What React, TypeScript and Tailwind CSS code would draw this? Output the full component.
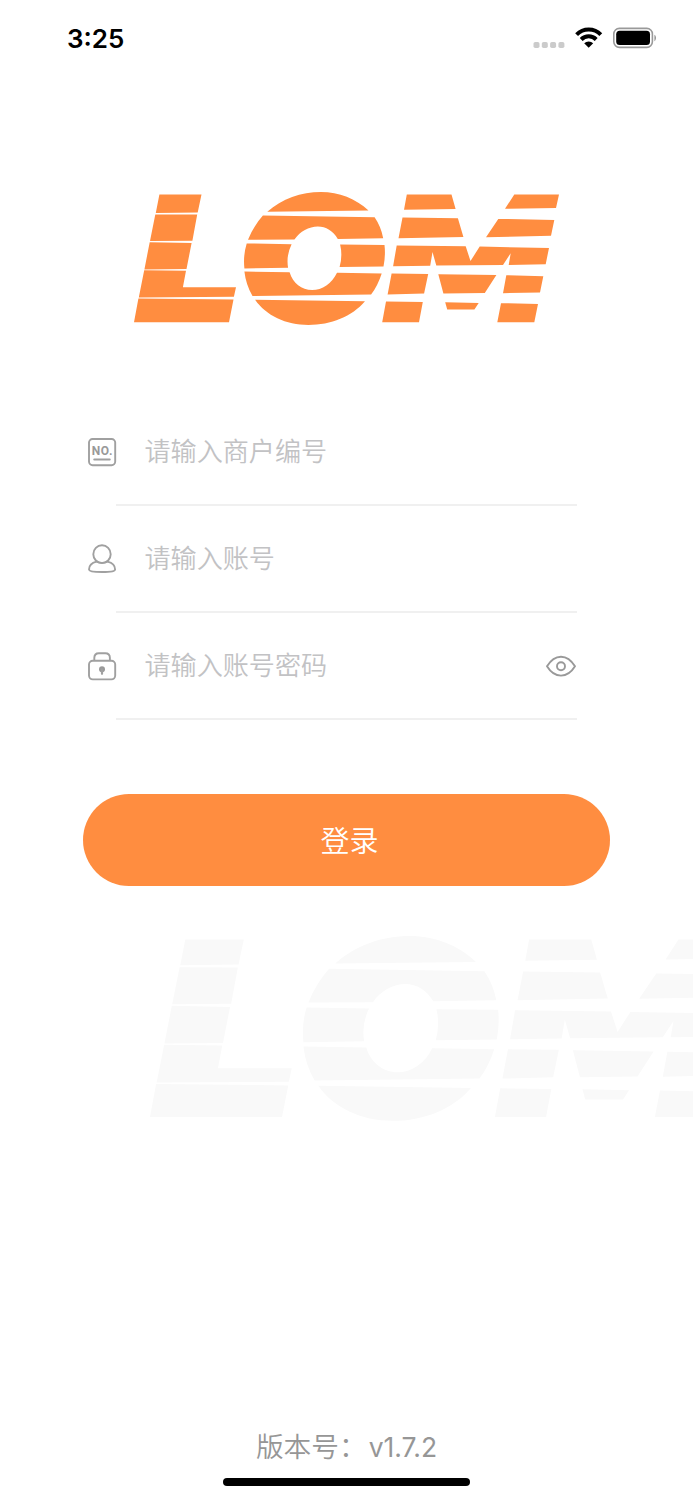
import type { ReactNode } from "react";

const LOGO_BANDS = [
  // L
  "M25.4 2.9H67.5L63.7 20.9L21.8 21.4Z",
  "M21.3 22.8L63.2 23L58.4 49.2L16 49.4Z",
  "M15.7 50.6L57.6 51.4L52.5 77.3L10.4 77.8Z",
  "M10.2 78.7L52 79.2L48.9 95.6H102L99.9 105.2L4.8 105.8Z",
  "M4.4 106.8L99.5 107.9L95 130.6H0Z",
  // O
  "M133.3 20.2C148 7 167 0.4 187 0.4C205 0.4 222 7 234.5 19Z",
  "M128.9 24L240.6 25.7Q247 35 249.2 46.6L203.8 47.3C199 39.5 192 35 183.8 35C175 35 166 40 160.4 48L114 48.2Q119.5 34.5 128.9 24Z",
  "M112.7 51.8L157.6 52.6Q152 64 154.1 76.1L110.4 76.8Q109 64 112.7 51.8Z",
  "M206.1 53L250.5 53.5Q251.7 64 249.5 74.9L205.6 75.4Q208.8 64 206.1 53Z",
  "M110.4 79.9L155.6 80.6C159 91.5 167.5 98.4 178.2 98.4C188 98.4 198 92 203 81.1L247.7 81.8Q244 93.5 237.1 103L118.5 104.4Q112 93.5 110.4 79.9Z",
  "M121.1 108.2L231 109.7C218 125 197 133.4 174.4 133.4C152 133.4 132 124 121.1 108.2Z",
  // M
  "M272.8 2.9H317.5L321.6 17.5L270 18.2Z",
  "M380.3 2.9H425L422 16.3L371 17.2Z",
  "M268.5 25.9L323.9 26.6L329.4 45.4L264.5 46.6Z",
  "M364.3 27.3L420.3 28.3L417 44.2L352 45.6Z",
  "M262.7 53.8L331.7 54.7L336.5 69.4L345.7 55L415 56.3L411.7 72.6L374.7 73.3L376.7 61.6L369 73.3L302.3 73.9L298.5 60.5L296.2 74.2L259.1 74.6Z",
  "M257.6 81.8L294.2 82.3L290.1 102L253.6 103Z",
  "M304.3 82.6L362.4 83.5L350.8 101.5L309.4 102Z",
  "M372.3 83.6L409.3 84.6L406 100.9L369 101.6Z",
  "M252 110L288.8 110.4L285 130.6H248.2Z",
  "M311.2 110.6L344.7 111.4L340.4 118H313.2Z",
  "M367 111.6L404 112.3L400.3 130.6H363.3Z",
];

function Logo({ className }: { className: string }) {
  return (
    <svg viewBox="0 0.4 426 134" className={className} fill="currentColor" aria-label="LOM">
      <path d={LOGO_BANDS.join("")} />
    </svg>
  );
}

function StatusBar() {
  return (
    <div className="flex h-[76px] shrink-0 items-center justify-between pl-[67px] pr-[36px]">
      <span className="pt-px font-['Inter',sans-serif] text-[26px] font-semibold leading-none text-black">3:25</span>
      <svg width="124" height="24" viewBox="0 0 124 24">
        {/* no signal */}
        <g fill="#cbcbcb">
          <rect x="0.5" y="16" width="6" height="6" rx="1.8" />
          <rect x="8.8" y="16" width="6" height="6" rx="1.8" />
          <rect x="17.1" y="16" width="6" height="6" rx="1.8" />
          <rect x="25.4" y="16" width="6" height="6" rx="1.8" />
        </g>
        {/* wifi */}
        <g fill="none" stroke="#000" strokeWidth="4">
          <path d="M43.6 8.6a17 17 0 0 1 24.2 0" />
          <path d="M48.2 13.5a10.5 10.5 0 0 1 15 0" />
        </g>
        <path d="M55.7 21.8l-4.5-4.5a6.6 6.6 0 0 1 9 0z" fill="#000" />
        {/* battery */}
        <rect x="80.8" y="2.4" width="38.6" height="19" rx="5.6" fill="none" stroke="#999" strokeWidth="1.6" />
        <rect x="83.2" y="4.8" width="33.8" height="14.2" rx="3.5" fill="#000" />
        <path d="M121.4 8.8v6.4c2.2-1 2.2-5.4 0-6.4z" fill="#999" />
      </svg>
    </div>
  );
}

function MerchantIcon() {
  return (
    <svg width="30" height="30" viewBox="0 0 30 30" fill="none" stroke="#a0a0a0" strokeWidth="1.9">
      <rect x="2" y="2" width="26.2" height="26.2" rx="3.6" />
      <path d="M7.2 22.5h15.6" strokeLinecap="round" />
      <text
        x="4.8"
        y="17.6"
        fill="#999"
        stroke="none"
        textLength="20.6"
        className="font-['Roboto',sans-serif] text-[12px] font-bold"
      >
        NO.
      </text>
    </svg>
  );
}

function UserIcon() {
  return (
    <svg width="30" height="30" viewBox="0 0 30 30" fill="none" stroke="#a0a0a0" strokeWidth="1.9">
      <ellipse cx="15" cy="10.2" rx="8.7" ry="8.9" />
      <path d="M9.500 17.6C5 18.8 2 21.9 2 25.4c0 1.6 5 2.6 13 2.6s13.1-1 13.1-2.6c0-3.500-3-6.600-7.600-7.800" />
      <path d="M9.500 17.6Q15 20.200 20.500 17.600" />
    </svg>
  );
}

function LockIcon() {
  return (
    <svg width="30" height="30" viewBox="0 0 30 30" fill="none" stroke="#a0a0a0" strokeWidth="1.9">
      <rect x="2" y="9.8" width="26.2" height="18.6" rx="3.8" />
      <path d="M7.3 9.8V7c0-3 1.8-4.7 4.6-4.7h6.4c2.8 0 4.6 1.7 4.6 4.7v2.8" />
      <circle cx="15" cy="18.2" r="3" fill="#999" stroke="none" />
      <path d="M15 18.4v4.4" strokeWidth="2.2" strokeLinecap="round" />
    </svg>
  );
}

function EyeIcon() {
  return (
    <svg width="30" height="22" viewBox="0 0 30 22" fill="none" stroke="#999" strokeWidth="1.9">
      <path d="M1 11.3C4.8 5.1 9.5 1.7 15 1.7S25.2 5.1 29 11.3c-3.8 6.2-8.5 9.3-14 9.3S4.800 17.5 1 11.3z" strokeLinejoin="round" />
      <circle cx="15" cy="11.3" r="4" />
    </svg>
  );
}

type FieldProps = {
  icon: ReactNode;
  placeholder: string;
  suffix?: ReactNode;
};

function Field({ icon, placeholder, suffix }: FieldProps) {
  return (
    <div className="h-[107px]">
      <div className="flex h-[105px] items-center pl-[87px] pr-[117px]">
        {icon}
        <span className="ml-[27.5px] flex-1 pb-[2px] text-[26.1px] font-[350] leading-none text-[#c2c2c4]">{placeholder}</span>
        {suffix}
      </div>
      <div className="mx-[116px] h-[2px] bg-[#f0f0f0]" />
    </div>
  );
}

export default function App() {
  return (
    <div className="flex h-[1500px] w-full flex-col overflow-hidden bg-white font-['Noto_Sans_CJK_SC',sans-serif]">
      <StatusBar />

      <Logo className="ml-[134px] mt-[116px] h-[134px] w-[426px] shrink-0 text-[#ff8d40]" />

      <div className="mt-[73px] shrink-0">
        <Field icon={<MerchantIcon />} placeholder="请输入商户编号" />
        <Field icon={<UserIcon />} placeholder="请输入账号" />
        <Field icon={<LockIcon />} placeholder="请输入账号密码" suffix={<EyeIcon />} />
      </div>

      <button
        type="button"
        className="mx-[83px] mt-[74px] flex h-[92px] shrink-0 items-center justify-center rounded-full bg-[#ff8d40] pb-[2px] pl-[6px] text-[29px] font-[350] leading-none text-white"
      >
        登录
      </button>

      {/* Oversized logo, runs off the right edge */}
      <Logo className="ml-[149.5px] mt-[50px] h-[186.3px] w-[592px] shrink-0 text-[#f9f9f9]" />

      <div className="mt-auto flex flex-col items-center pb-[14px]">
        <p className="mb-[18px] text-[27.7px] font-[350] leading-none text-[#969696]">
          版本号：<span className="ml-[2px] font-['Inter',sans-serif] text-[26.5px] font-normal">v1.7.2</span>
        </p>
        <div className="h-[8px] w-[247px] rounded-full bg-black" />
      </div>
    </div>
  );
}
